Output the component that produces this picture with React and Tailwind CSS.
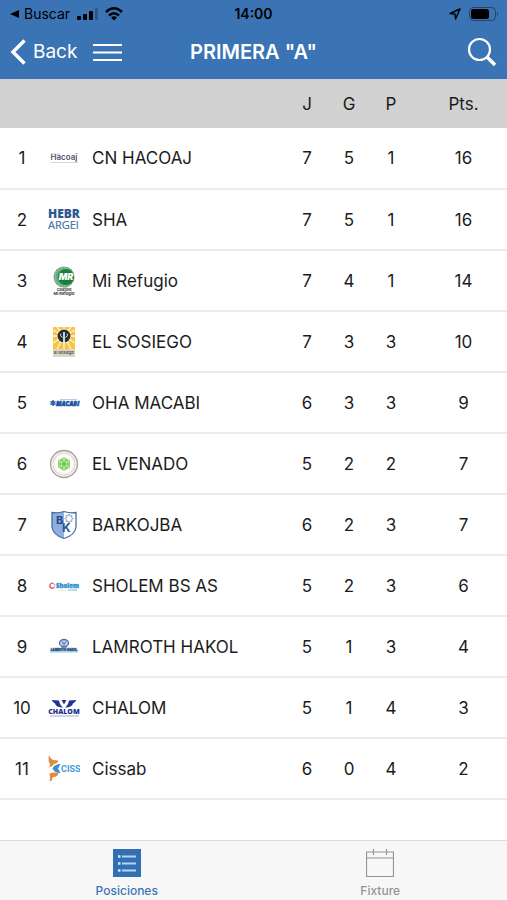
const teams = [
    { name: "CN HACOAJ", logo: HacoajLogo, j: 7, g: 5, p: 1, pts: 16 },
    { name: "SHA", logo: ShaLogo, j: 7, g: 5, p: 1, pts: 16 },
    { name: "Mi Refugio", logo: RefugioLogo, j: 7, g: 4, p: 1, pts: 14 },
    { name: "EL SOSIEGO", logo: SosiegoLogo, j: 7, g: 3, p: 3, pts: 10 },
    { name: "OHA MACABI", logo: MacabiLogo, j: 6, g: 3, p: 3, pts: 9 },
    { name: "EL VENADO", logo: VenadoLogo, j: 5, g: 2, p: 2, pts: 7 },
    { name: "BARKOJBA", logo: BarkojbaLogo, j: 6, g: 2, p: 3, pts: 7 },
    { name: "SHOLEM BS AS", logo: SholemLogo, j: 5, g: 2, p: 3, pts: 6 },
    { name: "LAMROTH HAKOL", logo: LamrothLogo, j: 5, g: 1, p: 3, pts: 4 },
    { name: "CHALOM", logo: ChalomLogo, j: 5, g: 1, p: 4, pts: 3 },
    { name: "Cissab", logo: CissabLogo, j: 6, g: 0, p: 4, pts: 2 },
];

// Every crest is drawn on the same 32x32 box
function Crest({ children }) {
    return (
        <svg viewBox="0 0 32 32" className="block size-8 mx-auto overflow-hidden" aria-hidden="true">
            {children}
        </svg>
    );
}

function HacoajLogo() {
    return (
        <Crest>
            <path d="M3 11h9" stroke="#c3c5d2" strokeWidth="1" />
            <text x="16" y="17" textAnchor="middle" fontSize="8" fontWeight="600" fill="#50526f" className="font-['Inter',sans-serif]">Hacoaj</text>
            <path d="M3 19.500h27" stroke="#d3d5df" strokeWidth="1" />
        </Crest>
    );
}

function ShaLogo() {
    return (
        <Crest>
            <text x="0" y="13" fontSize="12" fontWeight="800" fill="#2d578e" className="font-['Open_Sans',sans-serif]">HEBR</text>
            <text x="0" y="24" fontSize="11" fill="#4a72a6" stroke="#4a72a6" strokeWidth=".2" className="font-['Open_Sans',sans-serif]">ARGEI</text>
        </Crest>
    );
}

function RefugioLogo() {
    return (
        <Crest>
            <circle cx="16" cy="11" r="10.500" fill="#69a878" />
            <circle cx="16" cy="11" r="9" fill="none" stroke="#a9cfb1" strokeWidth="1" strokeDasharray="2 1" />
            <circle cx="18" cy="11" r="8" fill="#17803a" />
            <text x="18" y="14" textAnchor="middle" fontSize="9" fontWeight="900" fontStyle="italic" fill="#fff" className="font-['Inter',sans-serif]">MR</text>
            <text x="16" y="25" textAnchor="middle" fontSize="4" fontWeight="700" fill="#333" className="font-['Inter',sans-serif]">Castillo</text>
            <text x="16" y="29" textAnchor="middle" fontSize="4" fontWeight="700" fill="#333" className="font-['Inter',sans-serif]">Mi Refugio</text>
        </Crest>
    );
}

function SosiegoLogo() {
    return (
        <Crest>
            <rect x="5" y="0" width="22" height="29" fill="#fbf3da" />
            <rect x="5" y="0" width="22" height="22" fill="#f6c545" />
            <path d="M16 9L9 0M16 9L23 0M16 9L5 3M16 9L27 3M16 9H5M16 9H27M16 9L5 16M16 9L27 16M16 9L9 22M16 9L23 22M16 9V0M16 9V22" stroke="#fff4cf" strokeWidth="1.300" />
            <circle cx="16" cy="9" r="7" fill="#fff" />
            <circle cx="16" cy="9" r="6.500" fill="#232a30" />
            <path d="M16 5v11" stroke="#fff" strokeWidth="1.600" />
            <path d="M13 6.500q-2 2.500 1.500 4M19 6.500q2 2.500-1.500 4" fill="none" stroke="#dfe5ea" strokeWidth="1" />
            <rect x="5" y="22" width="22" height="6" fill="#ddd6c0" />
            <text x="16" y="27" textAnchor="middle" fontSize="4" fontWeight="600" fill="#4a4a46" className="font-['Inter',sans-serif]">El Sosiego</text>
            <path d="M5 29h22" stroke="#b5b5b0" />
        </Crest>
    );
}

function MacabiLogo() {
    return (
        <Crest>
            <path d="M5 12v6M2.500 13.500l5 3M7.500 13.500l-5 3" stroke="#2f68ad" strokeWidth="1.500" />
            <path d="M12 11.500h17" stroke="#b9cce4" strokeWidth="1" />
            <text x="8" y="18" fontSize="6" fontWeight="800" fontStyle="italic" fill="#174f9c" stroke="#174f9c" strokeWidth=".5" className="font-['Open_Sans',sans-serif]">MACABI</text>
        </Crest>
    );
}

function VenadoLogo() {
    return (
        <Crest>
            <circle cx="16" cy="15" r="13.500" fill="#f8f7f4" stroke="#a3a09b" strokeWidth="1.300" />
            <circle cx="16" cy="15" r="11" fill="none" stroke="#c9c4bf" strokeWidth="1.500" strokeDasharray="1 1" />
            <circle cx="16" cy="15" r="8.500" fill="#fff" />
            <path d="M16 8l6 3.500v7L16 22l-6-3.500v-7z" fill="#91cf70" />
            <path d="M16 9v12M11 12l10 6M21 12l-10 6" stroke="#d9f0cb" strokeWidth="1" />
            <circle cx="16" cy="15" r="2" fill="#79be55" />
        </Crest>
    );
}

function BarkojbaLogo() {
    return (
        <Crest>
            <path d="M4 2.500Q10 3.500 16 1.500Q22 3.500 28 2.500V17Q27 25 16 28.500Q5 25 4 17z" fill="#fff" />
            <path d="M4 2.500Q10 3.500 16 1.500V28.500Q5 25 4 17z" fill="#8db0df" />
            <path d="M4 2.500Q10 3.500 16 1.500Q22 3.500 28 2.500V17Q27 25 16 28.500Q5 25 4 17z" fill="none" stroke="#4b6ca3" strokeWidth="1.300" />
            <path d="M21 4l1 2 2-.5-.5 2 2 1-2 1 .5 2-2-.5-1 2-1-2-2 .5.500-2-2-1 2-1-.5-2 2 .5z" fill="none" stroke="#7795c2" strokeWidth=".8" />
            <text x="8" y="14" fontSize="11" fontWeight="700" fill="#1f4788" className="font-['Inter',sans-serif]">B</text>
            <text x="14" y="22" fontSize="12" fontWeight="700" fill="#2b5596" className="font-['Inter',sans-serif]">K</text>
        </Crest>
    );
}

function SholemLogo() {
    return (
        <Crest>
            <path d="M5.500 12.500a2.500 2.500 0 1 0 1 3.500" fill="none" stroke="#d95a55" strokeWidth="1.300" />
            <path d="M4.500 12.500q3 0 2.500 3" fill="none" stroke="#7fb2d9" strokeWidth="1" />
            <text x="8" y="17" fontSize="6" fontWeight="800" fill="#2e8dc6" stroke="#2e8dc6" strokeWidth=".3" className="font-['Open_Sans',sans-serif]">Sholem</text>
            <path d="M10 19.500h8" stroke="#dde6ec" />
            <path d="M20 19h9" stroke="#7fbadd" />
        </Crest>
    );
}

function LamrothLogo() {
    return (
        <Crest>
            <ellipse cx="16" cy="11" rx="4.500" ry="3.500" fill="#c4d1ec" stroke="#5471ad" strokeWidth="1.300" />
            <path d="M14 9.500l2 3 2-3M13 15h6" fill="none" stroke="#3b5ca3" strokeWidth="1" />
            <rect x="2" y="17" width="28" height="4" fill="#c4e8ee" />
            <text x="16" y="19" textAnchor="middle" fontSize="3" fontWeight="800" fill="#244f80" stroke="#244f80" strokeWidth=".3" className="font-['Inter',sans-serif]">LAMROTH HAKOL</text>
        </Crest>
    );
}

function ChalomLogo() {
    return (
        <Crest>
            <path d="M3.500 7l7.500.5q1 5 4 7q-7 0-8-4q-2-1-3.500-3.500zM28.500 7l-7.500.5q-1 5-4 7q7 0 8-4q2-1 3.500-3.500z" fill="#20349a" />
            <path d="M13.500 7h5L16 11.500z" fill="#20349a" />
            <text x="16" y="21" textAnchor="middle" fontSize="7" fontWeight="800" fill="#1c2f8c" className="font-['Open_Sans',sans-serif]">CHALOM</text>
            <path d="M2 23h29" stroke="#a3aacb" strokeWidth="1" />
        </Crest>
    );
}

function CissabLogo() {
    return (
        <Crest>
            <path d="M1 1q1.500 4 4 5l5 .5q0 3-4 3.500q-1 2-5 3.500q1.500-2 .5-4.500q-1.500-1-.5-8zM1.500 19.500q4-1.500 9-.5q-.5 4-5 4q-1 0-2 4h-2q1-2 0-7.500z" fill="#e38a3e" />
            <path d="M4.500 14.500q2-4.500 8-4.500l-2.500 4.500 2.500 4.500q-6 0-8-4.500z" fill="#398fd3" />
            <text x="13" y="18" fontSize="9" fontWeight="700" fill="#439bd8" className="font-['Roboto',sans-serif]">CISS</text>
        </Crest>
    );
}

function StatusBar() {
    return (
        <div className="grid grid-cols-[1fr_auto_1fr] items-center h-7 px-2 text-black">
            <div className="flex items-center gap-1">
                <svg viewBox="0 0 10 8" className="w-3 h-2" aria-hidden="true">
                    <path d="M10 0v8L1 4z" />
                </svg>
                <span className="text-sm">Buscar</span>
                <svg viewBox="0 0 26 14" className="w-[26px] h-[14px]" aria-hidden="true">
                    <rect x="3" y="9" width="4" height="4" rx="1" />
                    <rect x="9" y="7" width="4" height="6" rx="1" />
                    <rect x="15" y="4" width="4" height="9" rx="1" />
                    <rect x="21" y="1" width="3" height="12" rx="1" opacity=".25" />
                </svg>
                <svg viewBox="0 0 20 15" className="w-5 h-4" aria-hidden="true">
                    <path d="M2 5.500Q10-2 18 5.500M5 9Q10 4.500 15 9" fill="none" stroke="currentColor" strokeWidth="2.500" />
                    <path d="M10 14l-3-3q3-2.500 6 0z" />
                </svg>
            </div>
            <span className="text-sm font-semibold">14:00</span>
            <div className="flex items-center justify-end gap-2">
                <svg viewBox="0 0 12 12" className="size-3" aria-hidden="true">
                    <path d="M11 1L1 5.500l5 .5.500 5z" fill="none" stroke="currentColor" strokeWidth="1.400" strokeLinejoin="round" />
                </svg>
                <svg viewBox="0 0 30 14" className="w-[30px] h-[14px]" aria-hidden="true">
                    <rect x=".5" y=".5" width="26" height="13" rx="4" fill="none" stroke="currentColor" opacity=".4" />
                    <rect x="2" y="2" width="18" height="10" rx="2.500" />
                    <path d="M28 5q2 2 0 4z" opacity=".45" />
                </svg>
            </div>
        </div>
    );
}

function NavBar() {
    return (
        <div className="grid grid-cols-[1fr_auto_1fr] items-center h-12 px-[10px] text-white">
            <div className="flex items-center gap-4">
                <button className="flex items-center gap-[7px] text-[19px]">
                    <svg viewBox="0 0 16 26" className="w-4 h-[26px]" aria-hidden="true">
                        <path d="M14.500 1.500L3 13l11.500 11.500" fill="none" stroke="currentColor" strokeWidth="3.500" />
                    </svg>
                    Back
                </button>
                <button aria-label="Menu">
                    <svg viewBox="0 0 29 19" className="block w-[29px] h-[19px]" aria-hidden="true">
                        <path d="M0 2h29M0 9.500h29M0 17h29" stroke="currentColor" strokeWidth="2.200" />
                    </svg>
                </button>
            </div>
            <h1 className="text-xl font-semibold">PRIMERA "A"</h1>
            <button aria-label="Search" className="justify-self-end">
                <svg viewBox="0 0 30 30" className="block size-[30px]" aria-hidden="true">
                    <circle cx="12.500" cy="12.500" r="10.500" fill="none" stroke="currentColor" strokeWidth="2.200" />
                    <path d="M20 20l8 8" stroke="currentColor" strokeWidth="3.500" />
                </svg>
            </button>
        </div>
    );
}

function Standings() {
    return (
        <table className="w-full table-fixed border-collapse text-[17px] text-[#1c1c1c]">
            <colgroup>
                <col className="w-11" />
                <col className="w-10" />
                <col />
                <col className="w-[42px]" />
                <col className="w-[42px]" />
                <col className="w-[42px]" />
                <col className="w-[95px]" />
            </colgroup>
            <thead>
                <tr className="h-[49px] bg-[#d2d2d2] [&>th]:pt-[2px] [&>th]:font-normal">
                    <th colSpan={3} aria-label="Equipo"></th>
                    <th>J</th>
                    <th>G</th>
                    <th>P</th>
                    <th className="pl-2">Pts.</th>
                </tr>
            </thead>
            <tbody>
                {teams.map(({ name, logo: Logo, j, g, p, pts }, i) => (
                    <tr key={name} className="h-[61px] border-b-2 border-[#ebebeb] text-center [&>td]:pt-[2px]">
                        <td>{i + 1}</td>
                        <td><Logo /></td>
                        <td className="pl-2 text-left">{name}</td>
                        <td>{j}</td>
                        <td>{g}</td>
                        <td>{p}</td>
                        <td className="pl-2">{pts}</td>
                    </tr>
                ))}
            </tbody>
        </table>
    );
}

function TabBar() {
    return (
        <nav className="sticky bottom-0 grid grid-cols-2 h-[60px] border-t border-[#dcdcdc] bg-[#f7f7f7] text-xs font-medium">
            <button className="flex flex-col items-center gap-[6px] pt-2 text-[#3b74b5]">
                <svg viewBox="0 0 28 28" className="size-7 shrink-0" aria-hidden="true">
                    <rect width="28" height="28" fill="#3370b3" />
                    <path d="M9 7.500h14M9 14.500h14M9 21.500h14" stroke="#b9d3f2" strokeWidth="1.800" />
                    <path d="M5 7.500h2.500M5 14.500h2.500M5 21.500h2.500" stroke="#d5e5f8" strokeWidth="2.500" />
                </svg>
                Posiciones
            </button>
            <button className="flex flex-col items-center gap-[6px] pt-2 text-[#959595]">
                <svg viewBox="0 0 28 28" className="size-7 shrink-0" aria-hidden="true">
                    <path d="M.5 3h27v24.500H.5zM.5 9h27M7.500 0v6M20.500 0v6" fill="none" stroke="currentColor" strokeWidth="1.200" />
                </svg>
                Fixture
            </button>
        </nav>
    );
}

export default function App() {
    return (
        <div className="flex flex-col min-h-screen bg-white font-['Inter',sans-serif]">
            <header className="bg-[#3b74b5] pb-[3px]">
                <StatusBar />
                <NavBar />
            </header>
            <main className="flex-1">
                <Standings />
            </main>
            <TabBar />
        </div>
    );
}
